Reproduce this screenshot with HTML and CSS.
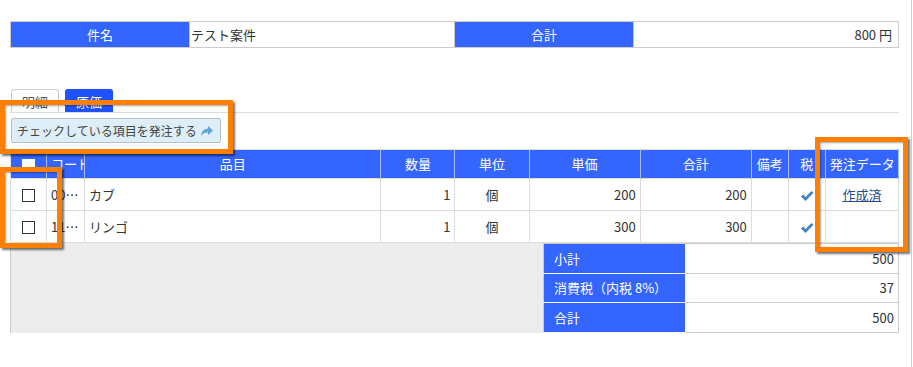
FILE: index.html
```html
<!DOCTYPE html>
<html lang="ja">
<head>
    <meta charset="UTF-8">
    <title>原価</title>
    <link rel="stylesheet" href="styles.css">
</head>
<body>
    <div class="page">
        <table class="summary-head">
            <tr>
                <th>件名</th>
                <td>テスト案件</td>
                <th>合計</th>
                <td class="num">800 円</td>
            </tr>
        </table>

        <div class="tabs">
            <div class="tab">明細</div>
            <div class="tab active">原価</div>
        </div>

        <div class="toolbar">
            <button class="order-btn">チェックしている項目を発注する
                <svg class="share" width="14" height="12" viewBox="0 0 14 12"><path d="M8 1 L13 5.5 L8 10 L8 7.5 C5 7.3 3 8.2 1 11 C1.5 6.5 4 4 8 3.6 Z" fill="#5ea6d3"/></svg>
            </button>
        </div>

        <table class="items">
            <colgroup>
                <col style="width:36px"><col style="width:38px"><col style="width:296px"><col style="width:74px"><col style="width:74px">
                <col style="width:111px"><col style="width:111px"><col style="width:37px"><col style="width:37px"><col style="width:73px">
            </colgroup>
            <thead>
                <tr>
                    <th><span class="box white"></span></th>
                    <th class="clip">コード</th>
                    <th>品目</th>
                    <th>数量</th>
                    <th>単位</th>
                    <th>単価</th>
                    <th>合計</th>
                    <th>備考</th>
                    <th>税</th>
                    <th class="clip">発注データ</th>
                </tr>
            </thead>
            <tbody>
                <tr>
                    <td class="c"><span class="box"></span></td>
                    <td class="ell">000123</td>
                    <td>カブ</td>
                    <td class="num">1</td>
                    <td class="c">個</td>
                    <td class="num">200</td>
                    <td class="num">200</td>
                    <td></td>
                    <td class="tax"><svg width="14" height="12" viewBox="0 0 14 12"><path d="M1 6.5 L3.5 4.5 L5.5 7 L11.5 1 L13.5 2.8 L5.5 11 Z" fill="#3f83c6"/></svg></td>
                    <td class="c"><a href="#">作成済</a></td>
                </tr>
                <tr>
                    <td class="c"><span class="box"></span></td>
                    <td class="ell">110456</td>
                    <td>リンゴ</td>
                    <td class="num">1</td>
                    <td class="c">個</td>
                    <td class="num">300</td>
                    <td class="num">300</td>
                    <td></td>
                    <td class="tax"><svg width="14" height="12" viewBox="0 0 14 12"><path d="M1 6.5 L3.5 4.5 L5.5 7 L11.5 1 L13.5 2.8 L5.5 11 Z" fill="#3f83c6"/></svg></td>
                    <td></td>
                </tr>
            </tbody>
        </table>

        <div class="footer">
            <div class="filler"></div>
            <table class="totals">
                <tr><th>小計</th><td>500</td></tr>
                <tr><th>消費税（内税 8%）</th><td>37</td></tr>
                <tr><th>合計</th><td>500</td></tr>
            </table>
        </div>

        <div class="mark mark-btn"></div>
        <div class="mark mark-check"></div>
        <div class="mark mark-order"></div>
    </div>
    <div class="edge"></div>
</body>
</html>
```

FILE: styles.css
```css
body {
    margin: 0;
    font-family: "Noto Sans CJK JP", "Liberation Sans", sans-serif;
    font-size: 13px;
    color: #333;
    background: #fff;
}

.page {
    position: relative;
    width: 889px;
    padding: 21px 0 0 10px;
}

table {
    border-collapse: collapse;
    table-layout: fixed;
}

.summary-head {
    width: 889px;
    height: 27px;
    border: 1px solid #ccc;
}

.summary-head th {
    width: 178px;
    background: #3565ff;
    color: #fff;
    font-weight: normal;
    padding: 0;
}

.summary-head td {
    padding: 0 6px 0 1px;
    border: 1px solid #ccc;
}

.num {
    text-align: right;
}

.c {
    text-align: center;
}

.tabs {
    display: flex;
    gap: 6px;
    margin-top: 41px;
    padding-left: 1px;
    height: 23px;
    border-bottom: 1px solid #ddd;
}

.tab {
    width: 46px;
    border: 1px solid #ccc;
    border-bottom: none;
    border-radius: 3px 3px 0 0;
    text-align: center;
    line-height: 24px;
    color: #555;
    background: #fff;
}

.tab.active {
    background: #1f52ff;
    border-color: #1f52ff;
    color: #fff;
}

.toolbar {
    padding: 5px 0 0 1px;
    height: 25px;
}

.order-btn {
    height: 25px;
    padding: 0 6px 0 5px;
    font-family: inherit;
    font-size: 12px;
    color: #444;
    background: #ddeef6;
    border: 1px solid #b5c0c6;
    border-radius: 2px;
    display: flex;
    align-items: center;
    gap: 3px;
}

.items {
    margin-top: 6px;
    width: 889px;
    border: 1px solid #ddd;
    line-height: 18px;
}

.items th {
    height: 28px;
    background: #3565ff;
    color: #fff;
    font-weight: normal;
    border-right: 1px solid #a9bcff;
    padding: 0;
    white-space: nowrap;
    overflow: hidden;
}

.items th.clip {
    text-align: left;
    padding-left: 4px;
}

.items td {
    height: 31px;
    border: 1px solid #ddd;
    padding: 0 4px;
    white-space: nowrap;
    overflow: hidden;
}

.items td.ell {
    text-overflow: ellipsis;
}

.items td.tax {
    padding: 0;
    text-align: center;
}

.tax svg {
    vertical-align: -2px;
}

.items a {
    color: #1f4f8f;
}

.box {
    display: inline-block;
    width: 11px;
    height: 11px;
    border: 1px solid #333;
    vertical-align: middle;
    background: #fff;
}

.box.white {
    border-color: #fff;
}

.footer {
    display: flex;
    height: 90px;
}

.filler {
    flex: 1;
    background: #ececec;
    border-left: 1px solid #ccc;
}

.totals {
    width: 356px;
    border: 1px solid #ccc;
}

.totals th {
    width: 131px;
    background: #3565ff;
    color: #fff;
    font-weight: normal;
    text-align: left;
    padding: 0 0 0 10px;
    border-bottom: 1px solid #fff;
}

.totals td {
    text-align: right;
    padding: 0 4px;
    border-bottom: 1px solid #ccc;
}

.mark {
    position: absolute;
    border: 5px solid #ff8000;
    box-shadow: 2px 2px 2px rgba(0, 0, 0, 0.55), inset 1px 1px 2px rgba(0, 0, 0, 0.35);
}

.mark-btn {
    left: 0;
    top: 100px;
    width: 223px;
    height: 44px;
}

.mark-check {
    left: 0;
    top: 167px;
    width: 52px;
    height: 71px;
}

.mark-order {
    left: 815px;
    top: 137px;
    width: 83px;
    height: 105px;
}

.edge {
    position: absolute;
    left: 911px;
    top: 0;
    width: 1px;
    height: 367px;
    background: #ccc;
}
```
